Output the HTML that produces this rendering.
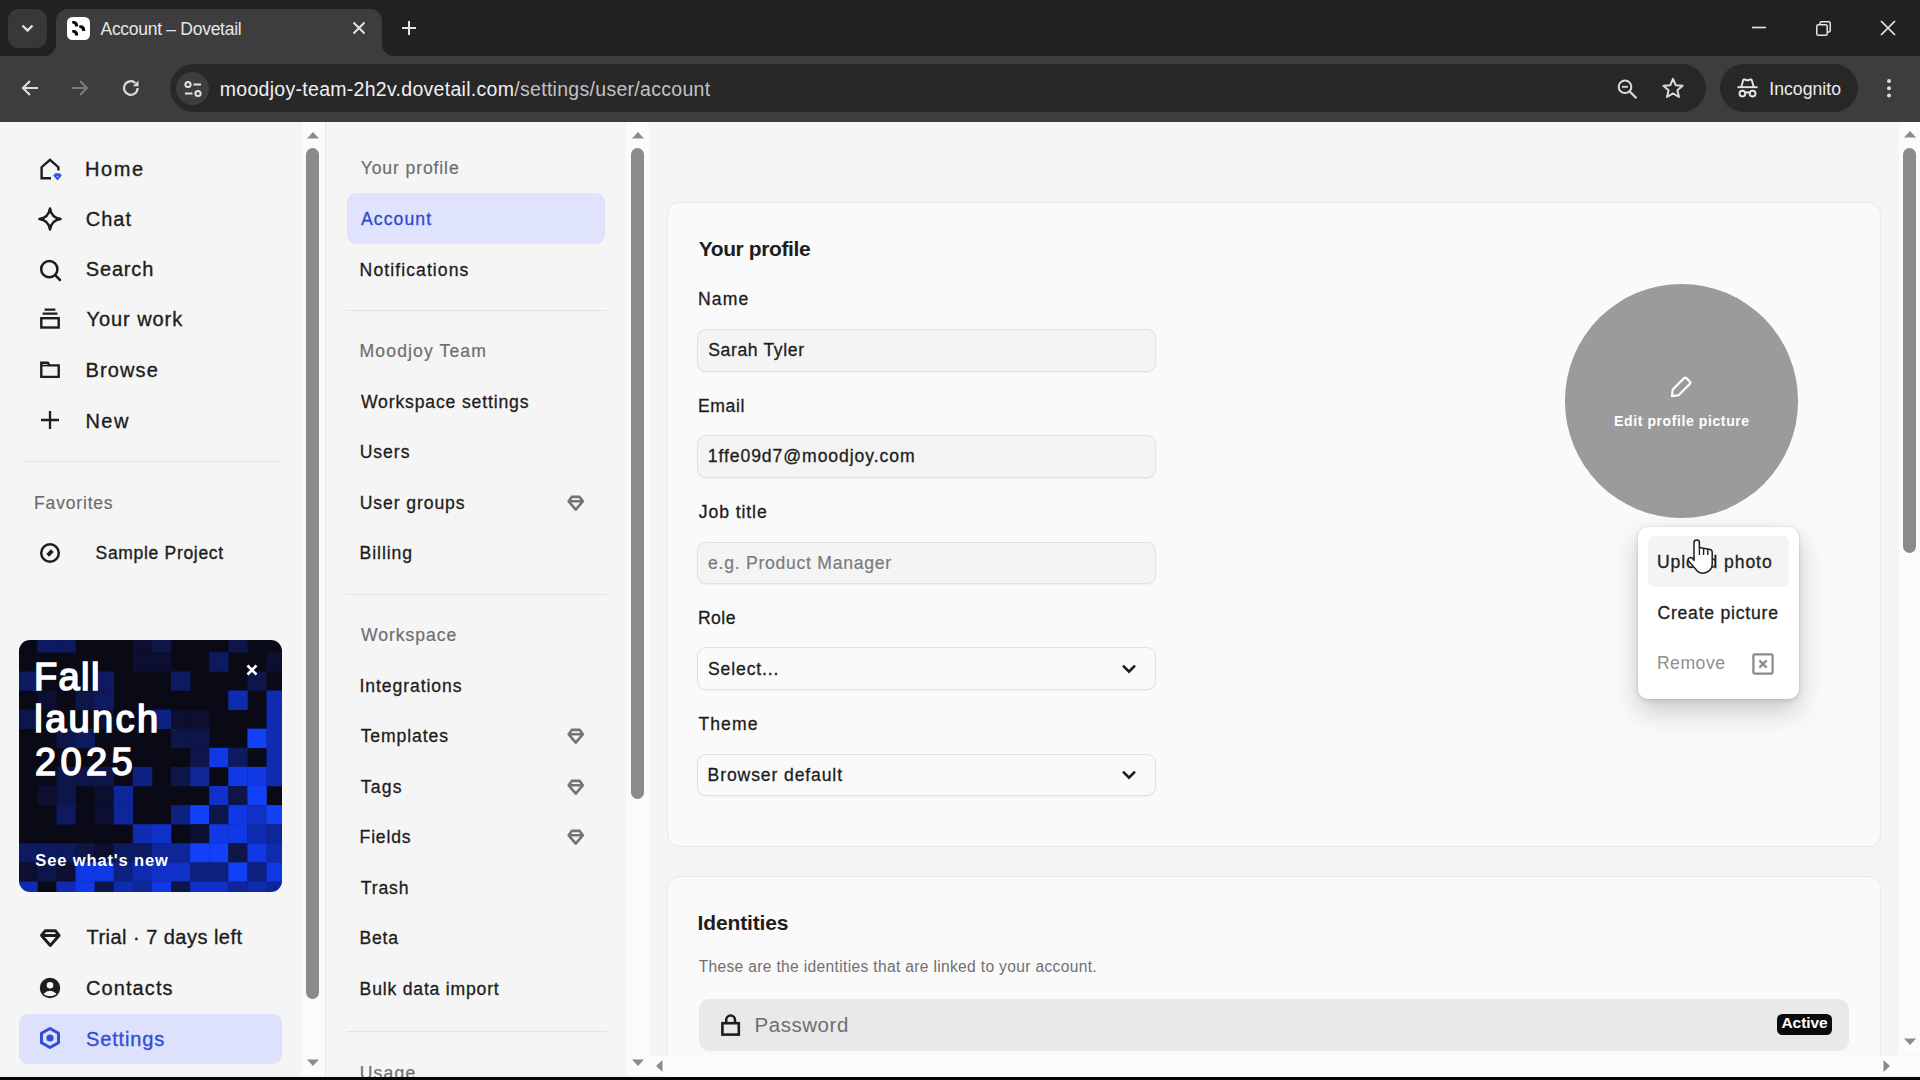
<!DOCTYPE html>
<html lang="en">
<head>
<meta charset="utf-8">
<title>Account – Dovetail</title>
<style>
*{box-sizing:border-box;margin:0;padding:0}
html,body{width:1920px;height:1080px;overflow:hidden;background:#f5f5f5}
body{font-family:"Liberation Sans",Arial,sans-serif;color:#1d1d20;position:relative}
.abs{position:absolute}
svg{position:absolute;overflow:visible}
.t{position:absolute;white-space:nowrap;line-height:1}
</style>
</head>
<body>
<!-- page background -->
<div class="abs" style="left:0;top:122px;width:1920px;height:954px;background:#f5f5f5"></div>
<!-- left navigation -->
<svg style="left:38px;top:156.5px" width="24" height="24" viewBox="0 0 24 24"><path d="M3.6 21.3 V10.2 L12 2.9 L20.4 10.2 V13.5 M2.4 21.3 H13" fill="none" stroke="#1d1d20" stroke-width="2.4" stroke-linejoin="miter"/><path d="M15.2 18.6 L17.2 16.3 H21.8 L23.8 18.6 L19.5 23.6 Z" fill="#3658e0"/><path d="M18.3 18.9 h2.4 l-1.2 1.4z" fill="#c9d4ff"/></svg>
<svg style="left:38px;top:207px" width="24" height="24" viewBox="0 0 24 24"><path d="M12 1.4 Q13.3 10.7 22.6 12 Q13.3 13.3 12 22.6 Q10.7 13.3 1.4 12 Q10.7 10.7 12 1.4 Z" fill="none" stroke="#1d1d20" stroke-width="2.5" stroke-linejoin="round"/></svg>
<svg style="left:38px;top:257.5px" width="24" height="24" viewBox="0 0 24 24"><circle cx="11.3" cy="11.2" r="8.1" fill="none" stroke="#1d1d20" stroke-width="2.5"/><path d="M17.2 17.2 L22 22" stroke="#1d1d20" stroke-width="2.5" stroke-linecap="round"/></svg>
<svg style="left:38px;top:306.3px" width="24" height="24" viewBox="0 0 24 24"><rect x="3.3" y="12.2" width="17.4" height="9.3" fill="none" stroke="#1d1d20" stroke-width="2.4"/><path d="M4.6 7.6 H19.4 M6.6 3.6 H17.4" stroke="#1d1d20" stroke-width="2.3"/></svg>
<svg style="left:38px;top:357.5px" width="24" height="24" viewBox="0 0 24 24"><path d="M3.3 4.8 H9.8 L11.4 7.4 H20.7 V18.9 H3.3 Z" fill="none" stroke="#1d1d20" stroke-width="2.4" stroke-linejoin="miter"/><path d="M3.3 7.6 H11" stroke="#1d1d20" stroke-width="1.6"/></svg>
<svg style="left:38px;top:407.6px" width="24" height="24" viewBox="0 0 24 24"><path d="M12 3 V21 M3 12 H21" stroke="#1d1d20" stroke-width="2.3"/></svg>
<div class="t" style="left:85.10px;top:159.00px;font-size:20px;color:#1d1d20;letter-spacing:1.533px;-webkit-text-stroke:0.35px #1d1d20;">Home</div>
<div class="t" style="left:85.70px;top:209.00px;font-size:20px;color:#1d1d20;letter-spacing:1.050px;-webkit-text-stroke:0.35px #1d1d20;">Chat</div>
<div class="t" style="left:85.80px;top:259.00px;font-size:20px;color:#1d1d20;letter-spacing:0.820px;-webkit-text-stroke:0.35px #1d1d20;">Search</div>
<div class="t" style="left:86.60px;top:309.00px;font-size:20px;color:#1d1d20;letter-spacing:0.919px;-webkit-text-stroke:0.35px #1d1d20;">Your work</div>
<div class="t" style="left:85.40px;top:360.00px;font-size:20px;color:#1d1d20;letter-spacing:1.160px;-webkit-text-stroke:0.35px #1d1d20;">Browse</div>
<div class="t" style="left:85.40px;top:411.00px;font-size:20px;color:#1d1d20;letter-spacing:1.475px;-webkit-text-stroke:0.35px #1d1d20;">New</div>
<div class="abs" style="left:24px;top:460.5px;width:258px;height:1.5px;background:#e3e3e3;"></div>
<div class="t" style="left:34.10px;top:495.00px;font-size:17.5px;color:#6b6b6b;letter-spacing:0.819px;-webkit-text-stroke:0.15px #6b6b6b;">Favorites</div>
<svg style="left:38px;top:541.3px" width="24" height="24" viewBox="0 0 24 24"><circle cx="12" cy="12" r="8.8" fill="none" stroke="#1d1d20" stroke-width="2.5"/><path d="M8.3 12.9 L12.9 8.2 L15.7 11.1 L11.1 15.8 Z" fill="#1d1d20"/></svg>
<div class="t" style="left:95.55px;top:545.00px;font-size:17.5px;color:#1d1d20;letter-spacing:0.685px;-webkit-text-stroke:0.35px #1d1d20;">Sample Project</div>
<div class="abs" style="left:19px;top:640px;width:263px;height:252px;border-radius:11px;overflow:hidden"><svg style="left:0;top:0;filter:blur(0.6px)" width="263" height="252" viewBox="0 0 263 252"><rect x="0" y="0" width="263" height="252" fill="#090a16"/><rect x="18.3" y="-6.8" width="19.4" height="19.4" fill="#0e1a60"/><rect x="37.4" y="-6.8" width="19.4" height="19.4" fill="#0e1a60"/><rect x="113.8" y="-6.8" width="19.4" height="19.4" fill="#0c0f30"/><rect x="132.9" y="-6.8" width="19.4" height="19.4" fill="#0e1548"/><rect x="209.3" y="-6.8" width="19.4" height="19.4" fill="#0e1548"/><rect x="113.8" y="12.3" width="19.4" height="19.4" fill="#0c0f30"/><rect x="132.9" y="12.3" width="19.4" height="19.4" fill="#0c0f30"/><rect x="190.2" y="12.3" width="19.4" height="19.4" fill="#0e1a60"/><rect x="247.5" y="12.3" width="19.4" height="19.4" fill="#0c0f30"/><rect x="-0.8" y="31.4" width="19.4" height="19.4" fill="#0e1a60"/><rect x="75.6" y="31.4" width="19.4" height="19.4" fill="#0e1a60"/><rect x="152.0" y="31.4" width="19.4" height="19.4" fill="#0e1a60"/><rect x="228.4" y="31.4" width="19.4" height="19.4" fill="#0e1548"/><rect x="18.3" y="50.5" width="19.4" height="19.4" fill="#0c0f30"/><rect x="56.5" y="50.5" width="19.4" height="19.4" fill="#0e1548"/><rect x="75.6" y="50.5" width="19.4" height="19.4" fill="#0e1a60"/><rect x="209.3" y="50.5" width="19.4" height="19.4" fill="#0f2cb0"/><rect x="247.5" y="50.5" width="19.4" height="19.4" fill="#0f2cb0"/><rect x="-0.8" y="69.6" width="19.4" height="19.4" fill="#0e1548"/><rect x="75.6" y="69.6" width="19.4" height="19.4" fill="#0c0f30"/><rect x="132.9" y="69.6" width="19.4" height="19.4" fill="#0e2080"/><rect x="152.0" y="69.6" width="19.4" height="19.4" fill="#0c0f30"/><rect x="171.1" y="69.6" width="19.4" height="19.4" fill="#0c0f30"/><rect x="247.5" y="69.6" width="19.4" height="19.4" fill="#0f2cb0"/><rect x="37.4" y="88.7" width="19.4" height="19.4" fill="#0e1548"/><rect x="56.5" y="88.7" width="19.4" height="19.4" fill="#0e1a60"/><rect x="152.0" y="88.7" width="19.4" height="19.4" fill="#0e1548"/><rect x="171.1" y="88.7" width="19.4" height="19.4" fill="#0e1548"/><rect x="228.4" y="88.7" width="19.4" height="19.4" fill="#1240f6"/><rect x="247.5" y="88.7" width="19.4" height="19.4" fill="#0f2cb0"/><rect x="171.1" y="107.8" width="19.4" height="19.4" fill="#0e1548"/><rect x="190.2" y="107.8" width="19.4" height="19.4" fill="#1038e4"/><rect x="209.3" y="107.8" width="19.4" height="19.4" fill="#0e1a60"/><rect x="247.5" y="107.8" width="19.4" height="19.4" fill="#0f2cb0"/><rect x="37.4" y="126.9" width="19.4" height="19.4" fill="#0e1548"/><rect x="56.5" y="126.9" width="19.4" height="19.4" fill="#0e1548"/><rect x="75.6" y="126.9" width="19.4" height="19.4" fill="#0e1548"/><rect x="113.8" y="126.9" width="19.4" height="19.4" fill="#0e2080"/><rect x="152.0" y="126.9" width="19.4" height="19.4" fill="#0e1548"/><rect x="171.1" y="126.9" width="19.4" height="19.4" fill="#0f2698"/><rect x="209.3" y="126.9" width="19.4" height="19.4" fill="#1038e4"/><rect x="228.4" y="126.9" width="19.4" height="19.4" fill="#1038e4"/><rect x="247.5" y="126.9" width="19.4" height="19.4" fill="#0f2cb0"/><rect x="18.3" y="146.0" width="19.4" height="19.4" fill="#0c0f30"/><rect x="37.4" y="146.0" width="19.4" height="19.4" fill="#0e1548"/><rect x="75.6" y="146.0" width="19.4" height="19.4" fill="#0c0f30"/><rect x="94.7" y="146.0" width="19.4" height="19.4" fill="#0f2698"/><rect x="190.2" y="146.0" width="19.4" height="19.4" fill="#1031c8"/><rect x="209.3" y="146.0" width="19.4" height="19.4" fill="#0e1548"/><rect x="228.4" y="146.0" width="19.4" height="19.4" fill="#1240f6"/><rect x="37.4" y="165.1" width="19.4" height="19.4" fill="#0e1a60"/><rect x="75.6" y="165.1" width="19.4" height="19.4" fill="#0c0f30"/><rect x="94.7" y="165.1" width="19.4" height="19.4" fill="#0f2698"/><rect x="152.0" y="165.1" width="19.4" height="19.4" fill="#0e2080"/><rect x="171.1" y="165.1" width="19.4" height="19.4" fill="#1240f6"/><rect x="190.2" y="165.1" width="19.4" height="19.4" fill="#0e1548"/><rect x="209.3" y="165.1" width="19.4" height="19.4" fill="#1038e4"/><rect x="228.4" y="165.1" width="19.4" height="19.4" fill="#1031c8"/><rect x="247.5" y="165.1" width="19.4" height="19.4" fill="#1240f6"/><rect x="113.8" y="184.2" width="19.4" height="19.4" fill="#0f2cb0"/><rect x="132.9" y="184.2" width="19.4" height="19.4" fill="#1031c8"/><rect x="171.1" y="184.2" width="19.4" height="19.4" fill="#0c0f30"/><rect x="190.2" y="184.2" width="19.4" height="19.4" fill="#1038e4"/><rect x="209.3" y="184.2" width="19.4" height="19.4" fill="#1038e4"/><rect x="228.4" y="184.2" width="19.4" height="19.4" fill="#0f2cb0"/><rect x="247.5" y="184.2" width="19.4" height="19.4" fill="#0f2698"/><rect x="-0.8" y="203.3" width="19.4" height="19.4" fill="#0e1a60"/><rect x="18.3" y="203.3" width="19.4" height="19.4" fill="#0e1a60"/><rect x="37.4" y="203.3" width="19.4" height="19.4" fill="#0e1a60"/><rect x="56.5" y="203.3" width="19.4" height="19.4" fill="#0e1548"/><rect x="75.6" y="203.3" width="19.4" height="19.4" fill="#0c0f30"/><rect x="94.7" y="203.3" width="19.4" height="19.4" fill="#0e1a60"/><rect x="113.8" y="203.3" width="19.4" height="19.4" fill="#0e1a60"/><rect x="132.9" y="203.3" width="19.4" height="19.4" fill="#0f2698"/><rect x="152.0" y="203.3" width="19.4" height="19.4" fill="#0f2698"/><rect x="171.1" y="203.3" width="19.4" height="19.4" fill="#1240f6"/><rect x="190.2" y="203.3" width="19.4" height="19.4" fill="#1240f6"/><rect x="209.3" y="203.3" width="19.4" height="19.4" fill="#0e1548"/><rect x="228.4" y="203.3" width="19.4" height="19.4" fill="#1038e4"/><rect x="247.5" y="203.3" width="19.4" height="19.4" fill="#0f2cb0"/><rect x="-0.8" y="222.4" width="19.4" height="19.4" fill="#0c0f30"/><rect x="18.3" y="222.4" width="19.4" height="19.4" fill="#0e1548"/><rect x="37.4" y="222.4" width="19.4" height="19.4" fill="#0c0f30"/><rect x="56.5" y="222.4" width="19.4" height="19.4" fill="#1038e4"/><rect x="75.6" y="222.4" width="19.4" height="19.4" fill="#1038e4"/><rect x="94.7" y="222.4" width="19.4" height="19.4" fill="#0e2080"/><rect x="113.8" y="222.4" width="19.4" height="19.4" fill="#0f2cb0"/><rect x="132.9" y="222.4" width="19.4" height="19.4" fill="#1031c8"/><rect x="152.0" y="222.4" width="19.4" height="19.4" fill="#1031c8"/><rect x="171.1" y="222.4" width="19.4" height="19.4" fill="#0e2080"/><rect x="190.2" y="222.4" width="19.4" height="19.4" fill="#0e2080"/><rect x="209.3" y="222.4" width="19.4" height="19.4" fill="#1240f6"/><rect x="228.4" y="222.4" width="19.4" height="19.4" fill="#0e2080"/><rect x="247.5" y="222.4" width="19.4" height="19.4" fill="#1038e4"/><rect x="-0.8" y="241.5" width="19.4" height="19.4" fill="#0f2cb0"/><rect x="37.4" y="241.5" width="19.4" height="19.4" fill="#0f2cb0"/><rect x="56.5" y="241.5" width="19.4" height="19.4" fill="#1038e4"/><rect x="75.6" y="241.5" width="19.4" height="19.4" fill="#0e1548"/><rect x="94.7" y="241.5" width="19.4" height="19.4" fill="#0f2cb0"/><rect x="113.8" y="241.5" width="19.4" height="19.4" fill="#0f2698"/><rect x="132.9" y="241.5" width="19.4" height="19.4" fill="#1038e4"/><rect x="152.0" y="241.5" width="19.4" height="19.4" fill="#0e1548"/><rect x="171.1" y="241.5" width="19.4" height="19.4" fill="#1031c8"/><rect x="190.2" y="241.5" width="19.4" height="19.4" fill="#1031c8"/><rect x="209.3" y="241.5" width="19.4" height="19.4" fill="#0f2698"/><rect x="228.4" y="241.5" width="19.4" height="19.4" fill="#0f2cb0"/><rect x="247.5" y="241.5" width="19.4" height="19.4" fill="#0f2698"/></svg></div>
<div class="t" style="left:34.00px;top:658.00px;font-size:38px;color:#ffffff;letter-spacing:1.383px;-webkit-text-stroke:1.6px #ffffff;">Fall</div>
<div class="t" style="left:34.35px;top:700.00px;font-size:38px;color:#ffffff;letter-spacing:2.340px;-webkit-text-stroke:1.6px #ffffff;">launch</div>
<div class="t" style="left:35.00px;top:743.00px;font-size:38px;color:#ffffff;letter-spacing:4.383px;-webkit-text-stroke:1.6px #ffffff;">2025</div>
<div class="t" style="left:35.35px;top:852.00px;font-size:16.5px;color:#ffffff;letter-spacing:0.869px;font-weight:bold;">See what's new</div>
<svg style="left:245px;top:663px" width="14" height="14" viewBox="0 0 14 14"><path d="M2.5 2.5 L11.5 11.5 M11.5 2.5 L2.5 11.5" stroke="#fff" stroke-width="2.6"/></svg>
<svg style="left:38px;top:925.5px" width="24" height="24" viewBox="0 0 24 24"><path d="M7.3 4.7 H17.3 L21.1 9.5 L12.3 19.5 L3.5 9.5 Z M3.5 9.5 H21.1" fill="none" stroke="#1d1d20" stroke-width="2.9" stroke-linejoin="round"/></svg>
<div class="t" style="left:86.50px;top:927.00px;font-size:20px;color:#1d1d20;letter-spacing:0.467px;-webkit-text-stroke:0.35px #1d1d20;">Trial · 7 days left</div>
<svg style="left:38px;top:976.4px" width="24" height="24" viewBox="0 0 24 24"><circle cx="12" cy="12" r="10.2" fill="#1d1d20"/><circle cx="12" cy="9.3" r="3.3" fill="#f5f5f5"/><path d="M5.3 17.9 Q12 11.6 18.7 17.9 Q12 22.4 5.3 17.9Z" fill="#f5f5f5"/></svg>
<div class="t" style="left:86.00px;top:978.00px;font-size:20px;color:#1d1d20;letter-spacing:1.093px;-webkit-text-stroke:0.35px #1d1d20;">Contacts</div>
<div class="abs" style="left:19px;top:1013.5px;width:263px;height:50.5px;background:#dde1fb;border-radius:9px;"></div>
<svg style="left:38px;top:1026px" width="24" height="24" viewBox="0 0 24 24"><path d="M12 2.5 L20.5 7.3 V16.7 L12 21.5 L3.5 16.7 V7.3 Z" fill="none" stroke="#2f4fd6" stroke-width="3" stroke-linejoin="round"/><circle cx="12" cy="12" r="3.6" fill="#2f4fd6"/></svg>
<div class="t" style="left:86.10px;top:1029.00px;font-size:20px;color:#2f4fd6;letter-spacing:0.836px;-webkit-text-stroke:0.35px #2f4fd6;">Settings</div>
<!-- settings navigation -->
<div class="abs" style="left:324.5px;top:122px;width:1.5px;height:954px;background:#e6e6e6;"></div>
<div class="abs" style="left:347px;top:192.5px;width:258px;height:51px;background:#dfe3fb;border-radius:9px;"></div>
<div class="t" style="left:360.65px;top:160.00px;font-size:17.6px;color:#6e6e6e;letter-spacing:0.882px;-webkit-text-stroke:0.2px #6e6e6e;">Your profile</div>
<div class="t" style="left:361.00px;top:211.00px;font-size:17.6px;color:#2d4ad0;letter-spacing:1.083px;-webkit-text-stroke:0.3px #2d4ad0;">Account</div>
<div class="t" style="left:359.60px;top:262.00px;font-size:17.6px;color:#1d1d20;letter-spacing:1.079px;-webkit-text-stroke:0.3px #1d1d20;">Notifications</div>
<div class="t" style="left:359.60px;top:343.00px;font-size:17.6px;color:#6e6e6e;letter-spacing:1.109px;-webkit-text-stroke:0.2px #6e6e6e;">Moodjoy Team</div>
<div class="t" style="left:360.95px;top:394.00px;font-size:17.6px;color:#1d1d20;letter-spacing:0.847px;-webkit-text-stroke:0.3px #1d1d20;">Workspace settings</div>
<div class="t" style="left:359.65px;top:444.00px;font-size:17.6px;color:#1d1d20;letter-spacing:0.975px;-webkit-text-stroke:0.3px #1d1d20;">Users</div>
<div class="t" style="left:359.65px;top:495.00px;font-size:17.6px;color:#1d1d20;letter-spacing:0.910px;-webkit-text-stroke:0.3px #1d1d20;">User groups</div>
<div class="t" style="left:359.60px;top:545.00px;font-size:17.6px;color:#1d1d20;letter-spacing:0.925px;-webkit-text-stroke:0.3px #1d1d20;">Billing</div>
<div class="t" style="left:360.95px;top:627.00px;font-size:17.6px;color:#6e6e6e;letter-spacing:0.950px;-webkit-text-stroke:0.2px #6e6e6e;">Workspace</div>
<div class="t" style="left:359.40px;top:678.00px;font-size:17.6px;color:#1d1d20;letter-spacing:0.932px;-webkit-text-stroke:0.3px #1d1d20;">Integrations</div>
<div class="t" style="left:360.65px;top:728.00px;font-size:17.6px;color:#1d1d20;letter-spacing:0.906px;-webkit-text-stroke:0.3px #1d1d20;">Templates</div>
<div class="t" style="left:360.65px;top:779.00px;font-size:17.6px;color:#1d1d20;letter-spacing:1.250px;-webkit-text-stroke:0.3px #1d1d20;">Tags</div>
<div class="t" style="left:359.60px;top:829.00px;font-size:17.6px;color:#1d1d20;letter-spacing:0.810px;-webkit-text-stroke:0.3px #1d1d20;">Fields</div>
<div class="t" style="left:360.65px;top:880.00px;font-size:17.6px;color:#1d1d20;letter-spacing:0.912px;-webkit-text-stroke:0.3px #1d1d20;">Trash</div>
<div class="t" style="left:359.60px;top:930.00px;font-size:17.6px;color:#1d1d20;letter-spacing:0.733px;-webkit-text-stroke:0.3px #1d1d20;">Beta</div>
<div class="t" style="left:359.60px;top:981.00px;font-size:17.6px;color:#1d1d20;letter-spacing:0.800px;-webkit-text-stroke:0.3px #1d1d20;">Bulk data import</div>
<div class="t" style="left:359.65px;top:1065.00px;font-size:17.6px;color:#6e6e6e;letter-spacing:1.225px;-webkit-text-stroke:0.2px #6e6e6e;">Usage</div>
<div class="abs" style="left:346px;top:309.5px;width:261px;height:1.5px;background:#e3e3e3;"></div>
<div class="abs" style="left:346px;top:593.5px;width:261px;height:1.5px;background:#e3e3e3;"></div>
<div class="abs" style="left:346px;top:1030.5px;width:261px;height:1.5px;background:#e3e3e3;"></div>
<svg style="left:566px;top:493px" width="20" height="20" viewBox="0 0 20 20"><path d="M5.8 3.9 H13.7 L16.8 8.3 L9.75 16.6 L2.7 8.3 Z M2.7 8.3 H16.8" fill="none" stroke="#747474" stroke-width="2.6" stroke-linejoin="round"/></svg>
<svg style="left:566px;top:726.3px" width="20" height="20" viewBox="0 0 20 20"><path d="M5.8 3.9 H13.7 L16.8 8.3 L9.75 16.6 L2.7 8.3 Z M2.7 8.3 H16.8" fill="none" stroke="#747474" stroke-width="2.6" stroke-linejoin="round"/></svg>
<svg style="left:566px;top:776.8px" width="20" height="20" viewBox="0 0 20 20"><path d="M5.8 3.9 H13.7 L16.8 8.3 L9.75 16.6 L2.7 8.3 Z M2.7 8.3 H16.8" fill="none" stroke="#747474" stroke-width="2.6" stroke-linejoin="round"/></svg>
<svg style="left:566px;top:827.3px" width="20" height="20" viewBox="0 0 20 20"><path d="M5.8 3.9 H13.7 L16.8 8.3 L9.75 16.6 L2.7 8.3 Z M2.7 8.3 H16.8" fill="none" stroke="#747474" stroke-width="2.6" stroke-linejoin="round"/></svg>
<!-- main content -->
<div class="abs" style="left:667px;top:202px;width:1214px;height:645px;background:#fafafa;border-radius:12px;border:1.5px solid #e8e8e8;"></div>
<div class="abs" style="left:667px;top:875.5px;width:1214px;height:260px;background:#fafafa;border-radius:12px;border:1.5px solid #e8e8e8;"></div>
<div class="t" style="left:698.65px;top:238.00px;font-size:21px;color:#1d1d20;letter-spacing:-0.386px;font-weight:bold;">Your profile</div>
<div class="t" style="left:697.90px;top:291.00px;font-size:17.6px;color:#1d1d20;letter-spacing:1.133px;-webkit-text-stroke:0.3px #1d1d20;">Name</div>
<div class="abs" style="left:697px;top:329px;width:458.5px;height:42.5px;background:#f4f4f4;border-radius:9px;border:1.5px solid #e1e1e1;box-shadow:0 1px 2px rgba(0,0,0,.05);"></div>
<div class="t" style="left:708.20px;top:342.00px;font-size:17.6px;color:#1d1d20;letter-spacing:0.620px;-webkit-text-stroke:0.3px #1d1d20;">Sarah Tyler</div>
<div class="t" style="left:697.90px;top:398.00px;font-size:17.6px;color:#1d1d20;letter-spacing:0.637px;-webkit-text-stroke:0.3px #1d1d20;">Email</div>
<div class="abs" style="left:697px;top:435px;width:458.5px;height:42.5px;background:#f4f4f4;border-radius:9px;border:1.5px solid #e1e1e1;box-shadow:0 1px 2px rgba(0,0,0,.05);"></div>
<div class="t" style="left:707.70px;top:448.00px;font-size:17.6px;color:#1d1d20;letter-spacing:0.926px;-webkit-text-stroke:0.3px #1d1d20;">1ffe09d7@moodjoy.com</div>
<div class="t" style="left:698.75px;top:504.00px;font-size:17.6px;color:#1d1d20;letter-spacing:0.919px;-webkit-text-stroke:0.3px #1d1d20;">Job title</div>
<div class="abs" style="left:697px;top:541.5px;width:458.5px;height:42.5px;background:#f4f4f4;border-radius:9px;border:1.5px solid #e1e1e1;box-shadow:0 1px 2px rgba(0,0,0,.05);"></div>
<div class="t" style="left:708.10px;top:555.00px;font-size:17.6px;color:#7b7b7b;letter-spacing:0.732px;-webkit-text-stroke:0.2px #7b7b7b;">e.g. Product Manager</div>
<div class="t" style="left:697.90px;top:610.00px;font-size:17.6px;color:#1d1d20;letter-spacing:0.450px;-webkit-text-stroke:0.3px #1d1d20;">Role</div>
<div class="abs" style="left:697px;top:647px;width:458.5px;height:42.5px;background:#fafafa;border-radius:9px;border:1.5px solid #e1e1e1;box-shadow:0 1px 2px rgba(0,0,0,.05);"></div>
<div class="t" style="left:708.00px;top:661.00px;font-size:17.6px;color:#1d1d20;letter-spacing:0.863px;-webkit-text-stroke:0.3px #1d1d20;">Select...</div>
<svg style="left:1119.6px;top:661.6px" width="18" height="14" viewBox="0 0 18 14"><path d="M3 3.6 L9 9.6 L15 3.6" fill="none" stroke="#1d1d20" stroke-width="2.6" stroke-linejoin="miter"/></svg>
<div class="t" style="left:698.45px;top:716.00px;font-size:17.6px;color:#1d1d20;letter-spacing:1.075px;-webkit-text-stroke:0.3px #1d1d20;">Theme</div>
<div class="abs" style="left:697px;top:753.5px;width:458.5px;height:42.5px;background:#fafafa;border-radius:9px;border:1.5px solid #e1e1e1;box-shadow:0 1px 2px rgba(0,0,0,.05);"></div>
<div class="t" style="left:707.60px;top:767.00px;font-size:17.6px;color:#1d1d20;letter-spacing:0.871px;-webkit-text-stroke:0.3px #1d1d20;">Browser default</div>
<svg style="left:1119.6px;top:767.6px" width="18" height="14" viewBox="0 0 18 14"><path d="M3 3.6 L9 9.6 L15 3.6" fill="none" stroke="#1d1d20" stroke-width="2.6" stroke-linejoin="miter"/></svg>
<div class="abs" style="left:1564.5px;top:284px;width:233.5px;height:233.5px;background:#9b9b9b;border-radius:117px;"></div>
<svg style="left:1667.2px;top:374.6px" width="26" height="26" viewBox="0 0 26 26"><g transform="translate(13 13) scale(1.18) rotate(45) translate(-13 -13)"><path d="M10.85 3.3 H15.15 a1.3 1.3 0 0 1 1.3 1.3 V18.2 L13 22.7 L9.55 18.2 V4.6 a1.3 1.3 0 0 1 1.3 -1.3 Z" fill="none" stroke="#fff" stroke-width="1.85" stroke-linejoin="round"/></g></svg>
<div class="t" style="left:1614.10px;top:414.00px;font-size:14px;color:#ffffff;letter-spacing:0.597px;font-weight:bold;">Edit profile picture</div>
<div class="t" style="left:697.60px;top:912.00px;font-size:21px;color:#1d1d20;letter-spacing:-0.150px;font-weight:bold;">Identities</div>
<div class="t" style="left:698.65px;top:959.00px;font-size:15.6px;color:#707070;letter-spacing:0.327px;">These are the identities that are linked to your account.</div>
<div class="abs" style="left:698.5px;top:998.8px;width:1150px;height:52.7px;background:#e9e9e9;border-radius:10px;"></div>
<svg style="left:719px;top:1012px" width="24" height="26" viewBox="0 0 24 26"><rect x="3.4" y="11.2" width="16.4" height="11.4" fill="none" stroke="#1d1d20" stroke-width="2.6"/><path d="M7.2 11 V8 a4.4 4.4 0 0 1 8.8 0 V11" fill="none" stroke="#1d1d20" stroke-width="2.5"/></svg>
<div class="t" style="left:754.55px;top:1015.00px;font-size:20.5px;color:#6e6e6e;letter-spacing:0.536px;">Password</div>
<div class="abs" style="left:1776.7px;top:1013.6px;width:55.3px;height:21px;background:#0a0a0a;border-radius:5.5px;"></div>
<div class="t" style="left:1781.45px;top:1015.00px;font-size:15.5px;color:#ffffff;letter-spacing:-0.050px;font-weight:bold;">Active</div>
<!-- scrollbars -->
<div class="abs" style="left:302px;top:122px;width:22.5px;height:954px;background:#fbfbfb;"></div>
<div class="abs" style="left:306px;top:147.5px;width:13px;height:851px;background:#8b8b8b;border-radius:6.5px;"></div>
<svg style="left:305.5px;top:129.5px" width="14" height="10" viewBox="0 0 14 10"><path d="M1 8.500 L7 2 L13 8.500 Z" fill="#8b8b8b"/></svg>
<svg style="left:305.5px;top:1057.5px" width="14" height="10" viewBox="0 0 14 10"><path d="M1 1.500 L7 8 L13 1.500 Z" fill="#8b8b8b"/></svg>
<div class="abs" style="left:626px;top:122px;width:22.5px;height:954px;background:#fbfbfb;"></div>
<div class="abs" style="left:631px;top:147.5px;width:13px;height:651px;background:#8b8b8b;border-radius:6.5px;"></div>
<svg style="left:630.5px;top:129.5px" width="14" height="10" viewBox="0 0 14 10"><path d="M1 8.500 L7 2 L13 8.500 Z" fill="#8b8b8b"/></svg>
<svg style="left:630.5px;top:1057.5px" width="14" height="10" viewBox="0 0 14 10"><path d="M1 1.500 L7 8 L13 1.500 Z" fill="#8b8b8b"/></svg>
<div class="abs" style="left:1898.5px;top:122px;width:21.5px;height:933px;background:#fbfbfb;"></div>
<div class="abs" style="left:1903px;top:147.5px;width:13px;height:405px;background:#8b8b8b;border-radius:6.5px;"></div>
<svg style="left:1903px;top:128.9px" width="14" height="10" viewBox="0 0 14 10"><path d="M1 8.500 L7 2 L13 8.500 Z" fill="#8b8b8b"/></svg>
<svg style="left:1903px;top:1037.3px" width="14" height="10" viewBox="0 0 14 10"><path d="M1 1.500 L7 8 L13 1.500 Z" fill="#8b8b8b"/></svg>
<div class="abs" style="left:648.5px;top:1055.5px;width:1271.5px;height:20.5px;background:#fcfcfc;"></div>
<svg style="left:654px;top:1059px" width="10" height="14" viewBox="0 0 10 14"><path d="M8.500 1 L2 7 L8.500 13 Z" fill="#8b8b8b"/></svg>
<svg style="left:1882px;top:1059px" width="10" height="14" viewBox="0 0 10 14"><path d="M1.500 1 L8 7 L1.500 13 Z" fill="#8b8b8b"/></svg>
<div class="abs" style="left:0px;top:1076.5px;width:1920px;height:3.5px;background:#050505;"></div>
<!-- avatar menu + cursor -->
<div class="abs" style="left:1638px;top:526.8px;width:161px;height:172.5px;background:#ffffff;border-radius:10px;box-shadow:0 12px 28px rgba(0,0,0,.20),0 2px 6px rgba(0,0,0,.10),0 0 0 1px rgba(0,0,0,.04);"></div>
<div class="abs" style="left:1648px;top:536.2px;width:140.5px;height:50.4px;background:#f4f4f4;border-radius:7px;"></div>
<div class="t" style="left:1656.95px;top:554.00px;font-size:17.6px;color:#1d1d20;letter-spacing:0.918px;-webkit-text-stroke:0.3px #1d1d20;">Upload photo</div>
<div class="t" style="left:1657.45px;top:605.00px;font-size:17.6px;color:#1d1d20;letter-spacing:0.773px;-webkit-text-stroke:0.3px #1d1d20;">Create picture</div>
<div class="t" style="left:1656.90px;top:655.00px;font-size:17.6px;color:#8f8f8f;letter-spacing:0.520px;">Remove</div>
<svg style="left:1751px;top:652px" width="24" height="24" viewBox="0 0 24 24"><rect x="2.4" y="2.4" width="19.2" height="19.2" rx="1" fill="none" stroke="#8a8a8a" stroke-width="2.2"/><path d="M8.4 8.4 L15.6 15.6 M15.6 8.4 L8.4 15.6" stroke="#8a8a8a" stroke-width="2.2"/></svg>
<svg style="left:1686px;top:538px" width="30" height="38" viewBox="0 0 30 38"><path d="M8 4.7 a2.7 2.7 0 0 1 5.4 0 V9.6 L24 11.6 Q26.2 12 26.2 14.5 V26 Q26.2 32 20 34.5 Q15.5 36.3 11.5 33.3 L3 23.6 Q1.2 21.2 3.2 19.8 Q5 18.8 6.6 20.6 L8 22.4 Z" fill="#fff" stroke="#1e1e1e" stroke-width="1.5" stroke-linejoin="round"/><path d="M13.4 9.6 V17 M17.6 10.4 V17 M21.8 11.2 V17" stroke="#1e1e1e" stroke-width="1.4" fill="none"/></svg>
<!-- browser chrome -->
<div class="abs" style="left:0px;top:0px;width:1920px;height:56px;background:#212121;"></div>
<div class="abs" style="left:0px;top:56px;width:1920px;height:66px;background:#3d3d3d;"></div>
<div class="abs" style="left:8px;top:9px;width:39px;height:39px;background:#383838;border-radius:11px;"></div>
<svg style="left:19px;top:21px" width="17" height="14" viewBox="0 0 17 14"><path d="M3.5 4.5 L8.5 9.5 L13.5 4.5" fill="none" stroke="#e3e3e3" stroke-width="2.3"/></svg>
<div class="abs" style="left:56px;top:9px;width:326px;height:48px;background:#3d3d3d;border-radius:12px 12px 0 0;"></div>
<svg style="left:44px;top:44px" width="12" height="12" viewBox="0 0 12 12"><path d="M12 0 V12 H0 A12 12 0 0 0 12 0Z" fill="#3d3d3d"/></svg>
<svg style="left:382px;top:44px" width="12" height="12" viewBox="0 0 12 12"><path d="M0 0 V12 H12 A12 12 0 0 1 0 0Z" fill="#3d3d3d"/></svg>
<div class="abs" style="left:67px;top:16.5px;width:23px;height:23px;background:#fff;border-radius:5.5px;"></div>
<svg style="left:67px;top:16.5px" width="23" height="23" viewBox="0 0 23 23"><g fill="#0a0a0a"><path d="M5.2 3.9 h1.5 a4.4 4.4 0 0 1 4.4 4.4 v1.2 h-3.1 q0.2-2.9-2.8-3 z"/><path d="M12.3 8.3 h1.5 a4.4 4.4 0 0 1 4.4 4.4 v1.2 h-3.1 q0.2-2.9-2.8-3 z"/><path d="M5.2 12.9 h1.5 a4.4 4.4 0 0 1 4.4 4.4 v1.2 h-3.1 q0.2-2.9-2.8-3 z"/></g></svg>
<div class="t" style="left:100.50px;top:21.00px;font-size:17.5px;color:#e6e6e6;letter-spacing:-0.282px;">Account – Dovetail</div>
<svg style="left:352px;top:21px" width="14" height="14" viewBox="0 0 14 14"><path d="M1.5 1.5 L12.5 12.5 M12.5 1.5 L1.5 12.5" stroke="#e3e3e3" stroke-width="2" fill="none"/></svg>
<svg style="left:401px;top:20px" width="16" height="16" viewBox="0 0 16 16"><path d="M8 1 V15 M1 8 H15" stroke="#e3e3e3" stroke-width="2" fill="none"/></svg>
<svg style="left:1751px;top:20px" width="16" height="16" viewBox="0 0 16 16"><path d="M1 7.5 H15" stroke="#e8e8e8" stroke-width="1.6" fill="none"/></svg>
<svg style="left:1815px;top:20px" width="17" height="17" viewBox="0 0 17 17"><rect x="1.8" y="4.8" width="10.4" height="10.4" rx="1.5" fill="none" stroke="#e8e8e8" stroke-width="1.5"/><path d="M5 4.5 V3.3 a1.5 1.5 0 0 1 1.5-1.5 H13.7 a1.5 1.5 0 0 1 1.5 1.5 V10.5 a1.5 1.5 0 0 1-1.5 1.5 H12.5" fill="none" stroke="#e8e8e8" stroke-width="1.5"/></svg>
<svg style="left:1880px;top:20px" width="16" height="16" viewBox="0 0 16 16"><path d="M1 1 L15 15 M15 1 L1 15" stroke="#e8e8e8" stroke-width="1.7" fill="none"/></svg>
<svg style="left:20px;top:78px" width="20" height="20" viewBox="0 0 20 20"><path d="M18 10 H3.5 M10 3 L3 10 L10 17" stroke="#dcdcdc" stroke-width="2.2" fill="none"/></svg>
<svg style="left:70px;top:78px" width="20" height="20" viewBox="0 0 20 20"><path d="M2 10 H16.5 M10 3 L17 10 L10 17" stroke="#7a7a7a" stroke-width="2.2" fill="none"/></svg>
<svg style="left:121px;top:78px" width="20" height="20" viewBox="0 0 20 20"><path d="M16.6 10 A6.8 6.8 0 1 1 14.4 5" stroke="#dcdcdc" stroke-width="2.2" fill="none"/><path d="M17.5 2.5 V8.2 H11.8 Z" fill="#dcdcdc"/></svg>
<div class="abs" style="left:170px;top:64.3px;width:1536px;height:48px;background:#282828;border-radius:24px;"></div>
<div class="abs" style="left:176px;top:72px;width:33px;height:33px;background:#3d3d3d;border-radius:17px;"></div>
<svg style="left:182px;top:78px" width="22" height="22" viewBox="0 0 22 22"><g stroke="#e3e3e3" stroke-width="2" fill="none"><circle cx="6" cy="6.5" r="2.6"/><path d="M11.5 6.5 H19"/><circle cx="16" cy="15.5" r="2.6"/><path d="M3 15.5 H10.5"/></g></svg>
<div class="t" style="left:219.75px;top:80.00px;font-size:19.5px;color:#f1f1f1;letter-spacing:0.292px;">moodjoy-team-2h2v.dovetail.com<span style="color:#c2c2c2">/settings/user/account</span></div>
<svg style="left:1615px;top:77px" width="24" height="24" viewBox="0 0 24 24"><circle cx="10" cy="9.8" r="6.3" stroke="#dcdcdc" stroke-width="2" fill="none"/><path d="M14.7 14.5 L21.5 21.3" stroke="#dcdcdc" stroke-width="2.2" fill="none"/><path d="M7 9.8 H13" stroke="#dcdcdc" stroke-width="1.8"/></svg>
<svg style="left:1661px;top:76px" width="24" height="24" viewBox="0 0 24 24"><path d="M12 2.8 L14.7 9.2 L21.6 9.8 L16.4 14.3 L18 21 L12 17.4 L6 21 L7.6 14.3 L2.4 9.8 L9.3 9.2 Z" stroke="#dcdcdc" stroke-width="2" fill="none" stroke-linejoin="round"/></svg>
<div class="abs" style="left:1720px;top:64.3px;width:138px;height:48px;background:#282828;border-radius:24px;"></div>
<svg style="left:1737px;top:78px" width="21" height="20" viewBox="0 0 21 20"><g fill="none" stroke="#e8e8e8" stroke-width="1.9"><path d="M0.5 9.2 H20.5"/><path d="M4.3 8.8 L6.2 2.2 Q6.6 1.2 7.6 1.5 L10.5 2.4 L13.4 1.5 Q14.4 1.2 14.8 2.2 L16.7 8.8"/><circle cx="5.4" cy="15.6" r="2.9"/><circle cx="15.6" cy="15.6" r="2.9"/><path d="M8.3 15 Q10.5 13.6 12.7 15"/></g></svg>
<div class="t" style="left:1769.20px;top:81.00px;font-size:17.6px;color:#ececec;letter-spacing:0.050px;">Incognito</div>
<svg style="left:1885px;top:76px" width="8" height="24" viewBox="0 0 8 24"><g fill="#dcdcdc"><circle cx="4" cy="5" r="2"/><circle cx="4" cy="12.3" r="2"/><circle cx="4" cy="19.6" r="2"/></g></svg>
</body>
</html>
